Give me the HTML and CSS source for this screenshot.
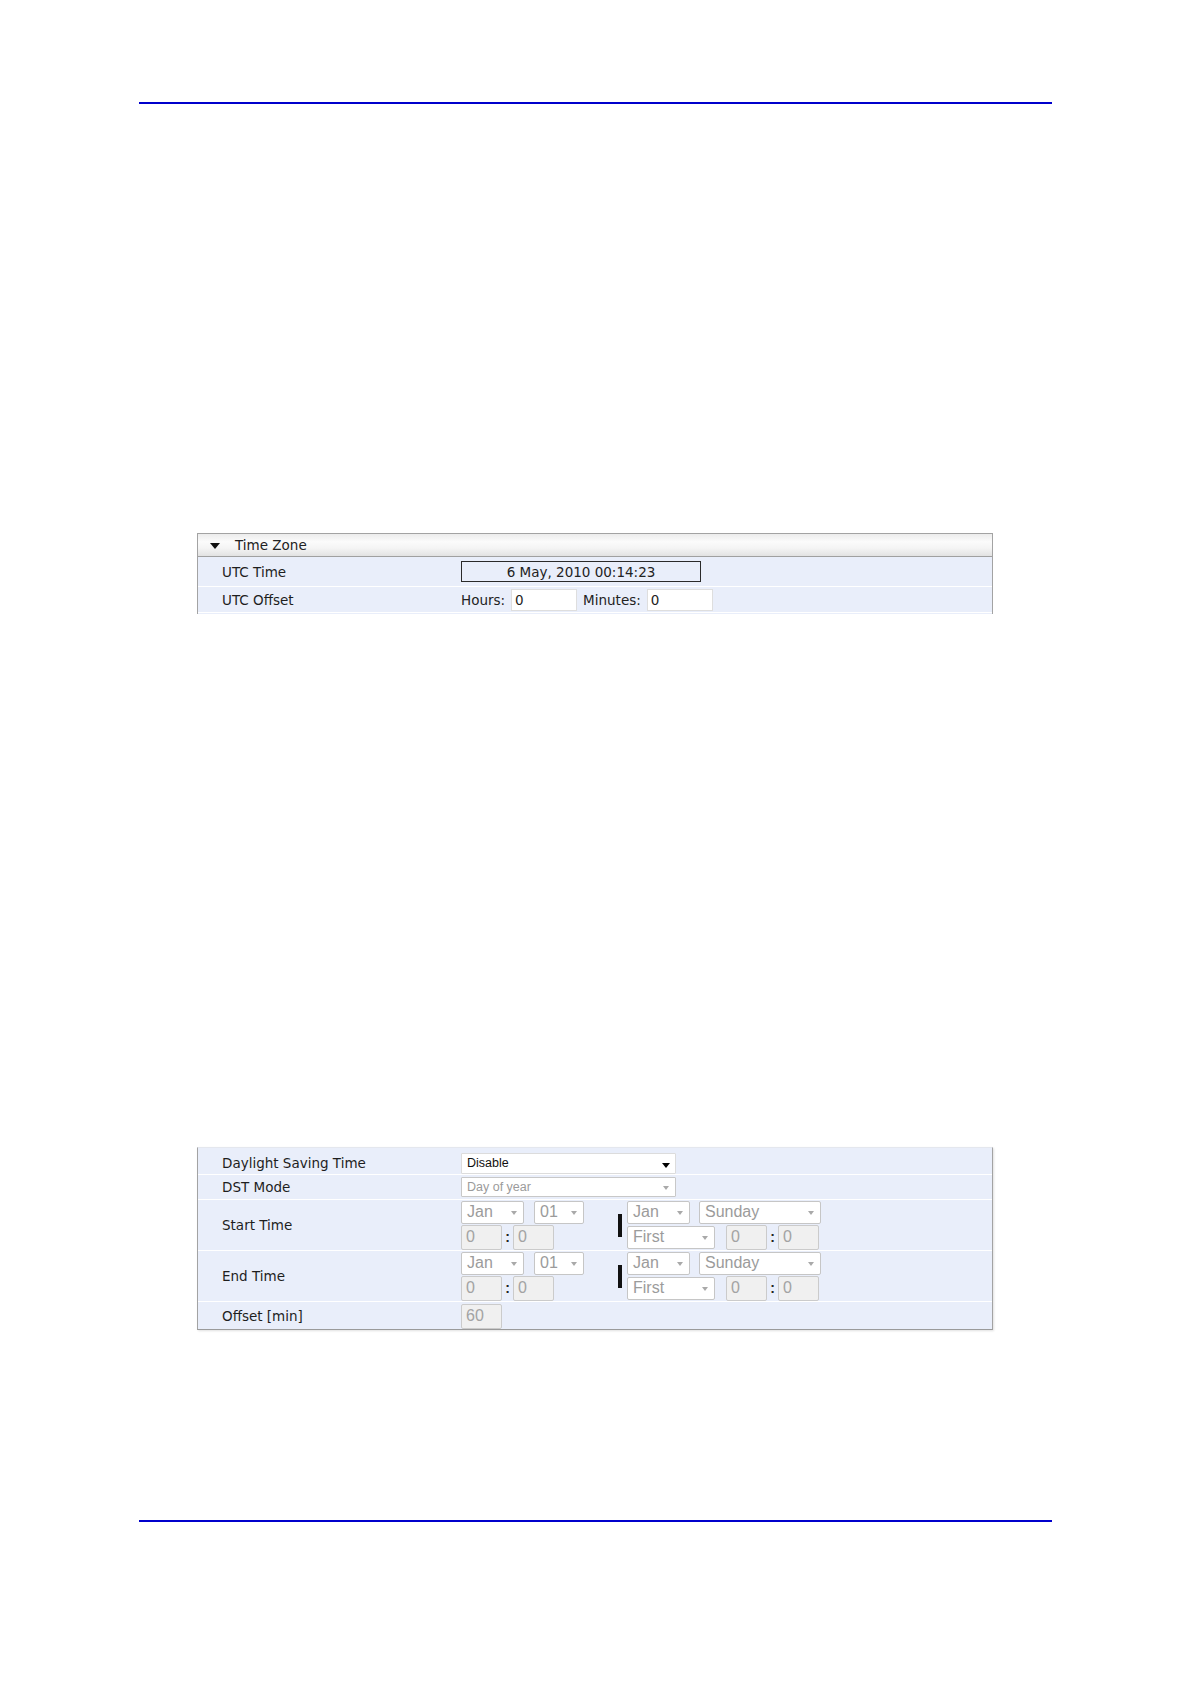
FILE: index.html
```html
<!DOCTYPE html>
<html>
<head>
<meta charset="utf-8">
<link rel="stylesheet" href="styles.css">
</head>
<body>
<div class="page">
  <div class="rule rule-top"></div>

  <div class="panel panel-tz">
    <div class="panel-head"><span class="caret"></span><span class="head-title">Time Zone</span></div>
    <div class="row row-utc">
      <div class="label">UTC Time</div>
      <div class="value"><div class="timebox">6 May, 2010 00:14:23</div></div>
    </div>
    <div class="row row-offset">
      <div class="label">UTC Offset</div>
      <div class="value">
        <span class="inline-label">Hours:</span><div class="textin">0</div>
        <span class="inline-label minutes">Minutes:</span><div class="textin">0</div>
      </div>
    </div>
    <div class="row row-cut">
      <div class="label"></div>
      <div class="value"><div class="sel sel-wide sel-cut"></div></div>
    </div>
  </div>

  <div class="panel panel-dst">
    <div class="row row-dst">
      <div class="label">Daylight Saving Time</div>
      <div class="value"><div class="sel sel-wide sel-active">Disable<span class="arrow arrow-dark"></span></div></div>
    </div>
    <div class="row row-mode">
      <div class="label">DST Mode</div>
      <div class="value"><div class="sel sel-wide sel-mode">Day of year<span class="arrow"></span></div></div>
    </div>
    <div class="row row-time">
      <div class="label">Start Time</div>
      <div class="value">
        <div class="dgrp dgrp-left">
          <div class="line"><div class="sel sel-mon">Jan<span class="arrow"></span></div><div class="sel sel-day">01<span class="arrow"></span></div></div>
          <div class="line"><div class="dis">0</div><span class="colon">:</span><div class="dis">0</div></div>
        </div>
        <div class="bar"></div>
        <div class="dgrp dgrp-right">
          <div class="line"><div class="sel sel-mon">Jan<span class="arrow"></span></div><div class="sel sel-wd">Sunday<span class="arrow"></span></div></div>
          <div class="line"><div class="sel sel-ord">First<span class="arrow"></span></div><div class="dis dis-r">0</div><span class="colon">:</span><div class="dis">0</div></div>
        </div>
      </div>
    </div>
    <div class="row row-time">
      <div class="label">End Time</div>
      <div class="value">
        <div class="dgrp dgrp-left">
          <div class="line"><div class="sel sel-mon">Jan<span class="arrow"></span></div><div class="sel sel-day">01<span class="arrow"></span></div></div>
          <div class="line"><div class="dis">0</div><span class="colon">:</span><div class="dis">0</div></div>
        </div>
        <div class="bar"></div>
        <div class="dgrp dgrp-right">
          <div class="line"><div class="sel sel-mon">Jan<span class="arrow"></span></div><div class="sel sel-wd">Sunday<span class="arrow"></span></div></div>
          <div class="line"><div class="sel sel-ord">First<span class="arrow"></span></div><div class="dis dis-r">0</div><span class="colon">:</span><div class="dis">0</div></div>
        </div>
      </div>
    </div>
    <div class="row row-last">
      <div class="label">Offset [min]</div>
      <div class="value"><div class="dis dis-off">60</div></div>
    </div>
  </div>

  <div class="rule rule-bottom"></div>
</div>
</body>
</html>
```

FILE: styles.css
```css
* { box-sizing: border-box; }
html, body { margin: 0; padding: 0; background: #ffffff; }
body { font-family: "DejaVu Sans", Verdana, sans-serif; color: #222; }
.page { width: 1191px; height: 1683px; overflow: hidden; }

.rule { height: 2px; background: #0000cc; margin-left: 139px; width: 913px; }
.rule-top { margin-top: 102px; }
.rule-bottom { margin-top: 190px; }

.panel {
  margin-left: 197px;
  width: 796px;
  background: #e9eefa;
  border-left: 1px solid #a3a3a3;
  border-right: 1px solid #a3a3a3;
  overflow: hidden;
}
.panel-tz { margin-top: 429px; height: 81px; border-top: 1px solid #a3a3a3; }
.panel-dst {
  margin-top: 533px; height: 183px;
  border-top: 1px solid #e4e7ee; border-bottom: 1px solid #9a9a9a;
  box-shadow: 1px 1px 2px rgba(0, 0, 0, 0.12);
}

.panel-head {
  height: 23px;
  display: flex;
  align-items: center;
  padding-left: 12px;
  background: linear-gradient(#ececec, #fbfbfb 35%, #f4f4f4 65%, #e2e2e2);
  border-bottom: 1px solid #a0a0a0;
  font-size: 13.5px;
  color: #222;
}
.caret {
  width: 0; height: 0;
  border-left: 5px solid transparent;
  border-right: 5px solid transparent;
  border-top: 6px solid #111;
  margin-right: 15px;
  margin-top: 1px;
}

.row {
  display: flex;
  align-items: center;
  border-bottom: 1px solid #ffffff;
  font-size: 13.5px;
}
.label { width: 263px; padding-left: 24px; flex: none; color: #1e1e1e; }
.value { display: flex; align-items: center; }

.row-utc { height: 30px; }
.row-offset { height: 26px; }
.row-cut { height: 10px; align-items: flex-start; padding-top: 1px; border-bottom: none; }

.timebox {
  width: 240px; height: 21px;
  border: 1px solid #2a2a2a;
  display: flex; align-items: center; justify-content: center;
  font-size: 13.5px; color: #222;
}
.inline-label { margin-right: 6px; }
.minutes { margin-left: 6px; }
.textin {
  width: 66px; height: 22px;
  background: #fff;
  border: 1px solid #dedede;
  padding-left: 3px;
  display: flex; align-items: center;
  font-size: 13.5px;
}

.row-dst { height: 27px; padding-top: 4px; }
.row-mode { height: 25px; }
.row-time { height: 51px; }
.row-last { height: 28px; border-bottom: none; }

.sel {
  position: relative;
  height: 23px;
  background: #fff;
  border: 1px solid #c6c6c6;
  border-radius: 2px;
  font-family: "Liberation Sans", Arial, sans-serif;
  font-size: 16px;
  color: #9b9b9b;
  padding-left: 5px;
  display: flex; align-items: center;
}
.sel-wide { width: 215px; height: 21px; font-size: 12.5px; border-radius: 1px; }
.sel-active { color: #111; border-color: #dcdcdc; }
.sel-mode { height: 20px; border-color: #c8c8c8; }
.sel-cut { border-color: #bdbdbd; }
.arrow {
  position: absolute;
  right: 6px; top: 50%;
  margin-top: -1px;
  width: 0; height: 0;
  border-left: 3.5px solid transparent;
  border-right: 3.5px solid transparent;
  border-top: 4px solid #a9a9a9;
}
.arrow-dark {
  right: 5px; margin-top: 0;
  border-left-width: 4px; border-right-width: 4px; border-top: 5px solid #000;
}

.dgrp { display: flex; flex-direction: column; gap: 1px; }
.dgrp-left { width: 157px; }
.line { display: flex; align-items: center; }
.sel-mon { width: 63px; }
.sel-day { width: 50px; margin-left: 10px; }
.sel-wd { width: 122px; margin-left: 9px; }
.sel-ord { width: 88px; }

.dis {
  width: 41px; height: 25px;
  background: #f0f0f0;
  border: 1px solid #cbcbcb;
  border-radius: 2px;
  font-family: "Liberation Sans", Arial, sans-serif;
  font-size: 16px;
  color: #a3a3a3;
  padding-left: 4px;
  display: flex; align-items: center;
}
.dis-r { margin-left: 11px; }
.dis-off { height: 25px; }
.colon {
  width: 11px;
  text-align: center;
  font-family: "Liberation Sans", Arial, sans-serif;
  font-weight: bold;
  font-size: 14px;
  color: #222;
}

.bar { width: 4px; height: 23px; background: #111; margin-right: 5px; flex: none; }
```
